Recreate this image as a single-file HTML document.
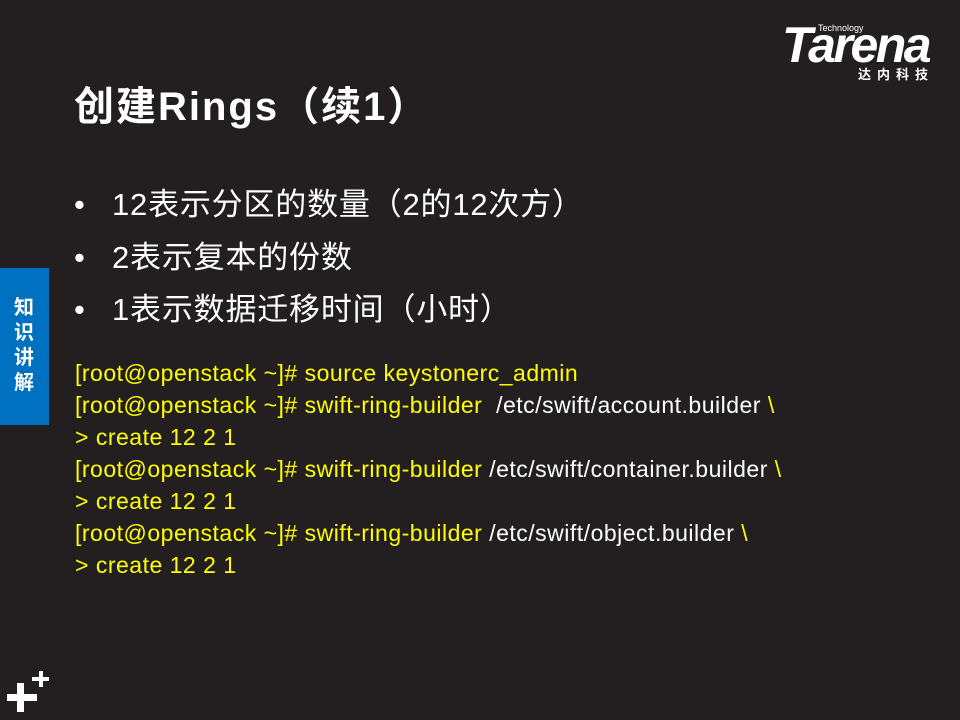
<!DOCTYPE html>
<html><head><meta charset="utf-8"><style>
body{margin:0;width:960px;height:720px;background:#231f20;overflow:hidden;position:relative;font-family:"Liberation Sans","Noto Sans CJK SC",sans-serif;color:#fff}
.a{position:absolute;white-space:nowrap}
.title{left:74px;top:74px;font-size:40px;font-weight:bold;letter-spacing:2px}
.b{left:74px;font-size:31px;letter-spacing:0.8px}
.b span{display:inline-block;width:38px}
.code{left:75px;top:357px;font-size:23px;line-height:32px;color:#ffff00;letter-spacing:0.5px}
.code i{font-style:normal;color:#fff}
.tab{left:0;top:268px;width:49px;height:157px;background:#0070c0}
.tab div{position:absolute;left:12px;top:28px;width:24px;font-size:20px;font-weight:bold;line-height:25px;text-align:center;white-space:normal;word-break:break-all}
.logo{left:782px;top:20px;font-size:50px;font-weight:bold;font-style:italic;letter-spacing:-2.5px;line-height:50px}
</style></head><body>
<div class="a logo">Tarena</div>
<div class="a" style="left:818px;top:23px;font-size:9px">Technology</div>
<div class="a" style="left:858px;top:64px;font-size:13px;font-weight:bold;letter-spacing:6px">达内科技</div>
<div class="a title">创建Rings（续1）</div>
<div class="a b" style="top:179px"><span>•</span>12表示分区的数量（2的12次方）</div>
<div class="a b" style="top:232px"><span>•</span>2表示复本的份数</div>
<div class="a b" style="top:284px"><span>•</span>1表示数据迁移时间（小时）</div>
<div class="a code">[root@openstack ~]# source keystonerc_admin<br>[root@openstack ~]# swift-ring-builder &nbsp;<i>/etc/swift/account.builder</i> \<br>&gt; create 12 2 1<br>[root@openstack ~]# swift-ring-builder <i>/etc/swift/container.builder</i> \<br>&gt; create 12 2 1<br>[root@openstack ~]# swift-ring-builder <i>/etc/swift/object.builder</i> \<br>&gt; create 12 2 1</div>
<div class="a tab"><div>知识讲解</div></div>
<svg class="a" style="left:0;top:660px" width="60" height="60"><path fill="#fff" d="M7 34h10v-11h7v11h13v7h-13v11h-7v-11h-10z"/><path fill="#fff" d="M32 17h7v-6h4v6h6v4h-6v6h-4v-6h-7z"/></svg>
</body></html>
